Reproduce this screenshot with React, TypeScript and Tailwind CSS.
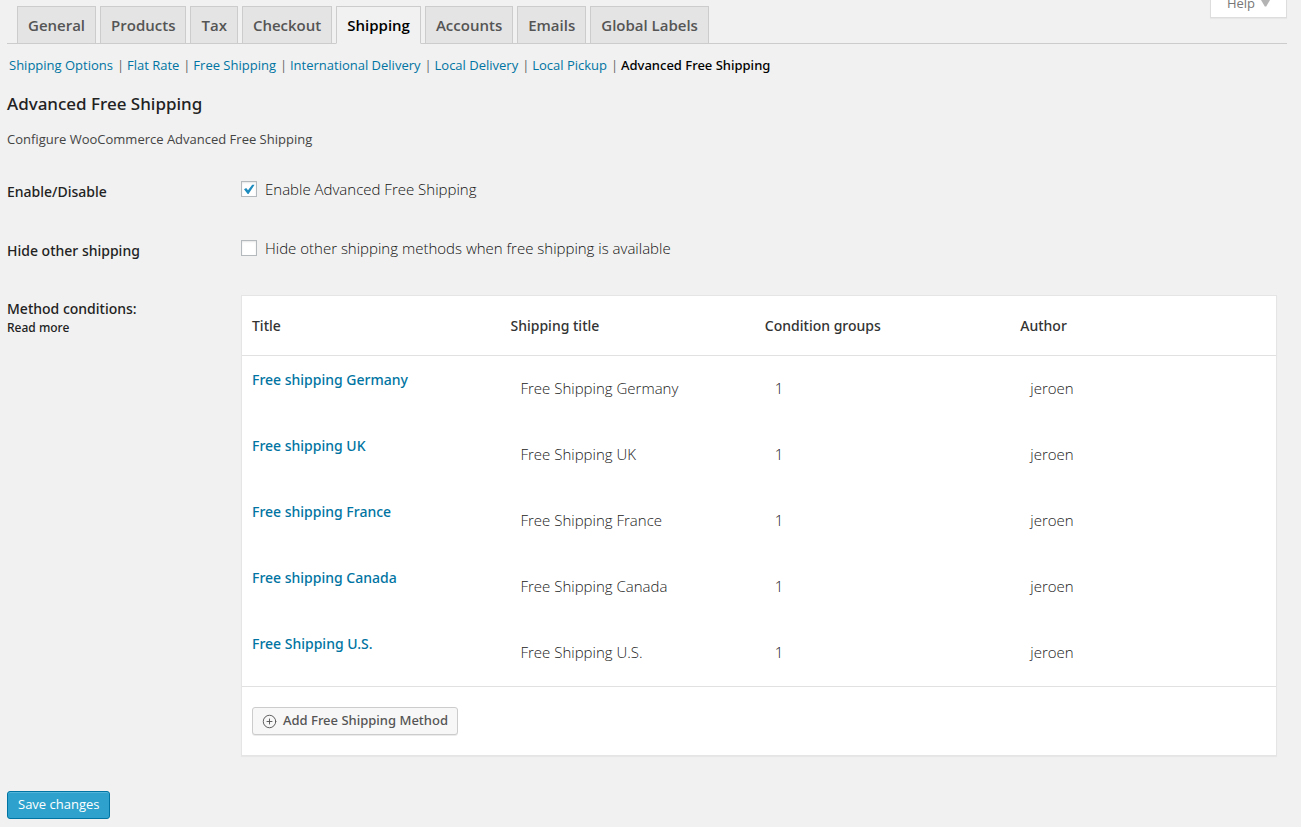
import { CirclePlus } from "lucide-react";

const tabs = ["General", "Products", "Tax", "Checkout", "Shipping", "Accounts", "Emails", "Global Labels"];

const sections = [
  "Shipping Options",
  "Flat Rate",
  "Free Shipping",
  "International Delivery",
  "Local Delivery",
  "Local Pickup",
  "Advanced Free Shipping",
];

const methods = [
  { title: "Free shipping Germany", shipping: "Free Shipping Germany", groups: 1, author: "jeroen" },
  { title: "Free shipping UK", shipping: "Free Shipping UK", groups: 1, author: "jeroen" },
  { title: "Free shipping France", shipping: "Free Shipping France", groups: 1, author: "jeroen" },
  { title: "Free shipping Canada", shipping: "Free Shipping Canada", groups: 1, author: "jeroen" },
  { title: "Free Shipping U.S.", shipping: "Free Shipping U.S.", groups: 1, author: "jeroen" },
];

function Tabs() {
  return (
    <nav className="flex h-11 items-end gap-1 border-b border-[#ccc] pl-[10px]">
      {tabs.map((tab) => (
        <a
          key={tab}
          href="#"
          className={
            tab === "Shipping"
              ? "-mb-px border border-b-[#f1f1f1] border-[#ccc] bg-[#f1f1f1] px-[10px] py-[6px] text-[15px] leading-6 font-semibold text-black"
              : "border border-b-0 border-[#ccc] bg-[#e4e4e4] px-[10px] py-[6px] text-[15px] leading-6 font-semibold text-[#555]"
          }
        >
          {tab}
        </a>
      ))}
    </nav>
  );
}

function Sections() {
  return (
    <ul className="mt-[11px] flex pl-[2px] text-[13px] leading-5">
      {sections.map((section, i) => (
        <li key={section} className="flex">
          {i > 0 && <span className="w-[14px] pl-[4px] text-[#666]">|</span>}
          <a
            href="#"
            className={
              section === "Advanced Free Shipping"
                ? "font-['Noto_Sans',sans-serif] font-medium text-black"
                : "text-[#0074a2]"
            }
          >
            {section}
          </a>
        </li>
      ))}
    </ul>
  );
}

function Option({ id, heading, label, checked }: { id: string; heading: string; label: string; checked: boolean }) {
  return (
    <div className="flex h-[59px] items-start">
      <div className="w-[234px] shrink-0 pt-[13px] font-['Noto_Sans',sans-serif] text-sm leading-5 font-medium text-[#222]">
        {heading}
      </div>
      <div className="flex items-center gap-2 pt-[10px]">
        <span className="relative flex">
          <input
            id={id}
            type="checkbox"
            defaultChecked={checked}
            className="peer size-4 appearance-none border border-[#b4b9be] bg-white shadow-[inset_0_1px_2px_rgba(0,0,0,0.1)]"
          />
          <svg
            viewBox="0 0 16 16"
            className="pointer-events-none absolute inset-0 hidden size-4 text-[#1e8cbe] peer-checked:block"
            fill="currentColor"
            aria-hidden="true"
          >
            <path d="M3 8.2 L5.2 7.1 L7 9.3 L11.2 3.8 L13.6 3.8 L7.5 13 L6.7 13 Z" />
          </svg>
        </span>
        <label htmlFor={id} className="text-[15px] leading-5 font-light text-[#111]">
          {label}
        </label>
      </div>
    </div>
  );
}

function Methods() {
  return (
    <div className="min-w-0 flex-1 border border-[#e5e5e5] bg-white shadow-[0_1px_1px_rgba(0,0,0,0.04)]">
      <table className="w-full table-fixed border-separate border-spacing-0 text-left leading-5">
        <colgroup>
          <col className="w-[25%]" />
          <col className="w-[24.6%]" />
          <col className="w-[24.7%]" />
          <col />
        </colgroup>
        <thead className="font-['Noto_Sans',sans-serif] text-sm leading-5 text-[#333]">
          <tr>
            {["Title", "Shipping title", "Condition groups", "Author"].map((name) => (
              <th key={name} scope="col" className="h-[60px] border-b border-[#e1e1e1] px-[10px] font-medium">
                {name}
              </th>
            ))}
          </tr>
        </thead>
        <tbody className="text-[15px] leading-5 font-light text-[#222]">
          {methods.map((m) => (
            <tr key={m.title} className="h-[66px]">
              <td className="px-[10px] pt-[14px] align-top">
                <a href="#" className="block font-['Noto_Sans',sans-serif] text-sm leading-5 font-medium text-[#0074a2]">
                  {m.title}
                </a>
              </td>
              <td className="px-5 pb-[2px]">{m.shipping}</td>
              <td className="px-5 pb-[2px]">{m.groups}</td>
              <td className="px-5 pb-[2px]">{m.author}</td>
            </tr>
          ))}
        </tbody>
      </table>
      <div className="border-t border-[#e1e1e1] px-[10px] py-5">
        <button
          type="button"
          className="flex h-7 items-center gap-[6px] rounded-[3px] border border-[#ccc] bg-[#f7f7f7] px-[9px] font-['Noto_Sans',sans-serif] text-[13px] font-medium text-[#555] shadow-[0_1px_0_rgba(0,0,0,0.08)]"
        >
          <CirclePlus className="size-[15px]" strokeWidth={1.5} aria-hidden="true" />
          Add Free Shipping Method
        </button>
      </div>
    </div>
  );
}

export default function App() {
  return (
    <div className="min-h-screen bg-[#f1f1f1] pr-[14px] pb-2 pl-[7px] font-['Open_Sans',sans-serif] text-[#444]">
      <div className="relative">
        <button
          type="button"
          className="absolute top-0 right-0 flex h-[18px] items-start gap-[6px] overflow-hidden border border-t-0 border-[#ddd] bg-white px-4 text-[13px] leading-[6px] text-[#777] shadow-[0_1px_1px_rgba(0,0,0,0.04)]"
        >
          Help
          <svg viewBox="0 0 9 7" className="h-[7px] w-[9px] fill-[#b4b4b4]" aria-hidden="true">
            <path d="M0 0 H9 L5.2 6.5 H3.8 Z" />
          </svg>
        </button>
        <Tabs />
      </div>
      <Sections />
      <h1 className="mt-[19px] font-['Noto_Sans',sans-serif] text-[17px] leading-5 font-medium text-[#222]">
        Advanced Free Shipping
      </h1>
      <p className="mt-[15px] text-[13px] leading-5">Configure WooCommerce Advanced Free Shipping</p>
      <form className="mt-5" onSubmit={(e) => e.preventDefault()}>
        <Option id="enable" heading="Enable/Disable" label="Enable Advanced Free Shipping" checked={true} />
        <Option
          id="hide-other"
          heading="Hide other shipping"
          label="Hide other shipping methods when free shipping is available"
          checked={false}
        />
        <div className="flex items-start pt-2 pr-[10px]">
          <div className="w-[234px] shrink-0 pt-1 font-['Noto_Sans',sans-serif] font-medium text-[#222]">
            <div className="text-sm leading-5">Method conditions:</div>
            <a href="#" className="block text-xs leading-[18px]">
              Read more
            </a>
          </div>
          <Methods />
        </div>
        <button
          type="submit"
          className="mt-[35px] flex h-7 items-center rounded-[3px] border border-[#0074a2] bg-[#2ea2cc] px-[10px] text-[13px] text-white shadow-[inset_0_1px_0_rgba(120,200,230,0.5)]"
        >
          Save changes
        </button>
      </form>
    </div>
  );
}
